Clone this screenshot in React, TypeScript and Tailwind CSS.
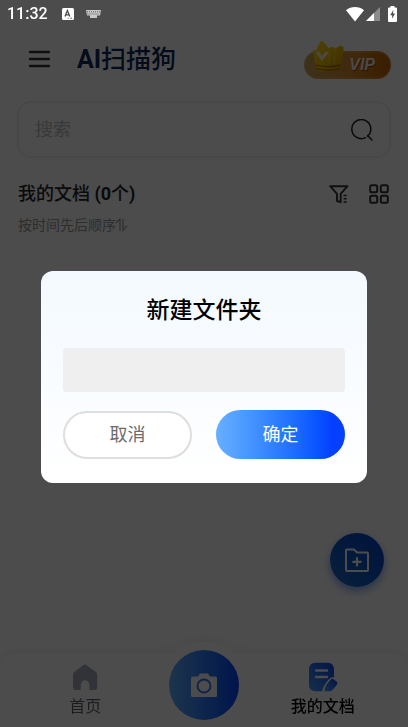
import React from "react";

function StatusBar() {
  return (
    <div className="pointer-events-none fixed inset-x-0 top-0 z-30 flex h-7 items-center pl-[7px] pr-[7px] text-white">
      <span className="font-['Roboto',sans-serif] text-base font-medium">11:32</span>
      <svg className="ml-[14px]" width="12" height="12" viewBox="0 0 12 12" aria-hidden="true">
        <rect width="12" height="12" rx="1.5" fill="#fff" />
        <path d="M3 8.6 5.4 2.6 7.8 8.6M3.8 6.8H7" stroke="#4c4c4c" strokeWidth="1.3" fill="none" />
        <path d="M5.6 10.2h1M8.2 10.2h2" stroke="#4c4c4c" strokeWidth="0.9" />
      </svg>
      <svg className="ml-3" width="15" height="8" viewBox="0 0 15 8" aria-hidden="true">
        <path d="M0 0h15l-1 5.5h-3V8H4V5.5H1Z" fill="#c9c9c9" />
        <path d="M1 1.8h13M1.5 4h12" stroke="#5a5a5a" strokeWidth="1" strokeDasharray="1 1" />
      </svg>
      <span className="flex-1" />
      <svg width="18" height="15" viewBox="0 0 18 15" aria-hidden="true">
        <path d="M0 3.2C5 -1 13 -1 18 3.2L9 14.5Z" fill="#fff" />
      </svg>
      <svg className="ml-[2px]" width="14" height="14" viewBox="0 0 14 14" aria-hidden="true">
        <path d="M14 0v14H0Z" fill="#8c8c8c" />
        <path d="M8 6v8H0Z" fill="#fff" />
      </svg>
      <svg className="ml-[8px] mr-[4px]" width="9" height="16" viewBox="0 0 9 16" aria-hidden="true">
        <path d="M2.5 0h4v1.5H8a1 1 0 0 1 1 1V15a1 1 0 0 1-1 1H1a1 1 0 0 1-1-1V2.500a1 1 0 0 1 1-1h1.500Z" fill="#fff" />
        <path d="M5.400 3.800 2.200 9.200h2v3.600L7 7.600H5Z" fill="#4c4c4c" />
      </svg>
    </div>
  );
}

function Crown() {
  return (
    <svg className="absolute -top-[11px] left-[8px]" width="34" height="33" viewBox="0 0 34 33" aria-hidden="true">
      <defs>
        <linearGradient id="crown" x1="0" y1="0" x2="1" y2="1">
          <stop offset="0" stopColor="#ffd91a" />
          <stop offset="0.5" stopColor="#f2c200" />
          <stop offset="1" stopColor="#cf9000" />
        </linearGradient>
      </defs>
      <path d="M4 28 1 12c-.4-2 1.300-2.700 3-1.500L8 2.200C9 .6 10.600.6 11.800 2.200L17 8.500c1.500-1.800 4.500-2 5.800.2l4.200-2.400c2.500-1.500 5 0 4.600 2.600L28.500 28c-.3 3-4.500 4-12 4S4.500 31 4 28Z" fill="url(#crown)" />
      <path d="M17 9v15M23 9.500 22 25M10 3.500l2 8" stroke="#ffe766" strokeWidth="1" fill="none" opacity=".5" />
      <path d="M4 25c7 2 17 2 24.500 0M4.500 28.500c7 2 17 2 23.500 0" stroke="#a86a00" strokeWidth="1.300" fill="none" />
      <path d="m3.800 12 3.200-.6 2.800 4.600 4.200-5 2.500 1.500-6.500 8.500Z" fill="#fff6e0" />
    </svg>
  );
}

function Header() {
  return (
    <header className="flex h-[63px] items-center pl-[28px] pr-[17px]">
      <button aria-label="菜单" className="shrink-0">
        <svg width="23" height="19" viewBox="0 0 23 19" fill="none" stroke="#333" strokeWidth="2.600" strokeLinecap="round" aria-hidden="true">
          <path d="M2.200 2h18.600M2.200 9h18.600M2.200 16h18.600" />
        </svg>
      </button>
      <h1 className="ml-[26px] flex-1 text-[25px] font-medium leading-8 text-[#10295a]"><b className="font-bold">AI</b>扫描狗</h1>
      <button className="relative mt-[10px] flex h-7 w-[87px] items-center justify-end rounded-full bg-linear-to-r from-[#c9a45c] via-[#d98a28] via-55% to-[#bd6200] pr-4 shadow-[inset_0_0_3px_rgba(255,225,160,0.6)]">
        <Crown />
        <span className="font-['Liberation_Sans',Arial,sans-serif] text-base font-bold italic text-[#fff0e0] [text-shadow:1px_1px_1px_#8a4a10]">VIP</span>
      </button>
    </header>
  );
}

function SearchBox() {
  return (
    <label className="mx-[17px] mt-[10px] flex h-[57px] items-center rounded-[14px] border-2 border-[#f1f1f1] pl-4 pr-4">
      <input type="text" placeholder="搜索" aria-label="搜索" className="min-w-0 flex-1 bg-transparent text-lg text-[#333] outline-none placeholder:text-[#bcbec4]" />
      <svg width="22" height="22" viewBox="0 0 22 22" fill="none" stroke="#22222a" strokeWidth="1.500" strokeLinecap="round" aria-hidden="true">
        <path d="M14.500 18.600A9.500 9.500 0 1 1 16.600 17.200M16.600 16.500 20.900 21" />
      </svg>
    </label>
  );
}

function DocumentsBar() {
  return (
    <section className="pl-[18px] pr-[19px] pt-[22px]">
      <div className="flex h-7 items-center">
        <h2 className="flex-1 text-lg font-medium text-[#262626]">我的文档 <b className="font-bold">(0</b>个<b className="font-bold">)</b></h2>
        <button aria-label="筛选">
          <svg width="20" height="20" viewBox="0 0 20 20" fill="none" stroke="#333" strokeWidth="1.900" strokeLinejoin="round" aria-hidden="true">
            <path d="M1.200 2.200h17.300l-6.800 7.600v8.400L8 17V9.800Z" />
            <path d="M14.600 11.500h3M14.600 14.700h3M14.600 17.900h3" strokeWidth="1.500" />
          </svg>
        </button>
        <button aria-label="网格视图" className="ml-5">
          <svg width="20" height="20" viewBox="0 0 20 20" fill="none" stroke="#333" strokeWidth="2" aria-hidden="true">
            <rect x="1.200" y="1.200" width="7" height="7" rx="1.500" />
            <rect x="11.800" y="1.200" width="7" height="7" rx="1.500" />
            <rect x="1.200" y="11.800" width="7" height="7" rx="1.500" />
            <rect x="11.800" y="11.800" width="7" height="7" rx="1.500" />
          </svg>
        </button>
      </div>
      <button className="mt-[7px] flex items-center text-sm text-[#999]">
        按时间先后顺序
        <svg className="-ml-px" width="13" height="14" viewBox="0 0 13 14" fill="none" stroke="#999" strokeWidth="1.200" aria-hidden="true">
          <path d="M1 5 5 1v12M8 1v11.500L12 7.500" />
        </svg>
      </button>
    </section>
  );
}

function AddFolderButton() {
  return (
    <button aria-label="新建文件夹" className="fixed bottom-[140px] right-6 flex size-[54px] items-center justify-center rounded-full bg-linear-to-tr from-[#1c6cc8] to-[#0a3cc8] shadow-[0_4px_8px_rgba(20,80,230,0.5)]">
      <svg width="26" height="26" viewBox="0 0 26 26" fill="none" stroke="#fff" strokeWidth="2" strokeLinejoin="round" strokeLinecap="round" aria-hidden="true">
        <path d="M2 3.500a1 1 0 0 1 1-1h7L13 5.500h10a1 1 0 0 1 1 1V23a1 1 0 0 1-1 1H3a1 1 0 0 1-1-1Z" />
        <path d="M13 11v7.600M9.200 14.800h7.600" strokeWidth="2.200" />
      </svg>
    </button>
  );
}

function BottomNav() {
  return (
    <nav className="relative mt-auto drop-shadow-[0_-2px_6px_rgba(0,0,0,0.06)]">
      <div className="absolute left-1/2 -top-3 size-[90px] -translate-x-1/2 rounded-full bg-white" />
      <div className="relative grid h-[74px] grid-cols-3 justify-items-center rounded-t-2xl bg-white px-[26px]">
        <a href="#home" className="flex flex-col items-center pt-[11px] text-base leading-6 text-[#60626c]">
          <svg width="26" height="26" viewBox="0 0 26 26" aria-hidden="true">
            <path d="M11.300 1.200a3 3 0 0 1 3.400 0l9.500 7c.8.6 1 1.200 1 2.300V23a3 3 0 0 1-3 3h-4.800v-5.500a4.200 4.200 0 0 0-8.600 0V26H4a3 3 0 0 1-3-3V10.500c0-1.100.3-1.700 1-2.300Z" fill="#a3aabb" />
          </svg>
          <span className="mt-[5px]">首页</span>
        </a>
        <button aria-label="拍照" className="-mt-[3px] flex size-[70px] items-center justify-center rounded-full bg-linear-to-r from-[#63aeff] to-[#0540ff]">
          <svg width="26" height="24" viewBox="0 0 26 24" aria-hidden="true">
            <path d="M1.500 3.500H7L9 .5h8l2 3h5.500A1.500 1.500 0 0 1 26 5v17.500a1.500 1.500 0 0 1-1.500 1.500h-23A1.500 1.500 0 0 1 0 22.500V5a1.500 1.500 0 0 1 1.500-1.500Z" fill="#fff" />
            <circle cx="13" cy="13" r="6.500" fill="none" stroke="#2f70ff" strokeWidth="1.800" />
          </svg>
        </button>
        <a href="#documents" className="flex flex-col items-center pt-[9px] text-base font-medium leading-6 text-black">
          <svg width="30" height="30" viewBox="0 0 30 30" aria-hidden="true">
            <defs>
              <linearGradient id="doc" x1="0" y1="1" x2="1" y2="0">
                <stop offset="0" stopColor="#4a9bff" />
                <stop offset="1" stopColor="#0a46e8" />
              </linearGradient>
            </defs>
            <path d="M7 .8h13a6 6 0 0 1 6 6v8.400c-3-.4-5 1.500-7 4.300-3 4-4.500 6.500-4.800 9.800H7a6 6 0 0 1-6-6V6.800a6 6 0 0 1 6-6Z" fill="url(#doc)" />
            <path d="M8 8.500h11M8 15h11" stroke="#fff" strokeWidth="2.400" strokeLinecap="round" />
            <path d="M22.500 17.800c1-1.200 2.300-1.300 3.400-.4l2.600 2.100c1.200 1 1.200 2.200.3 3.300l-3.800 4.700c-1 1.200-2 1.700-3.500 1.700h-4.800c.1-4.500 1.800-6.500 5.800-11.400Z" fill="url(#doc)" />
          </svg>
          <span className="mt-[3px]">我的文档</span>
        </a>
      </div>
    </nav>
  );
}

function NewFolderDialog() {
  return (
    <div className="fixed inset-0 z-20 flex items-center justify-center bg-black/70 pt-[27px]">
      <form role="dialog" aria-modal="true" aria-labelledby="dialog-title" onSubmit={(e) => e.preventDefault()} className="w-4/5 rounded-xl bg-linear-to-b from-[#f3f9ff] to-white px-[22px] pb-6 pt-6">
        <h2 id="dialog-title" className="text-center text-[23px] font-medium leading-8 text-black">新建文件夹</h2>
        <input type="text" aria-labelledby="dialog-title" className="mt-[21px] block h-11 w-full rounded-[4px] bg-[#efefef] px-3 text-base outline-none" />
        <div className="mt-[18px] grid grid-cols-2 items-end gap-6">
          <button type="button" className="h-12 rounded-full border-2 border-[#dedede] bg-white text-lg text-[#6c6c6c]">取消</button>
          <button type="submit" className="h-[49px] rounded-full bg-linear-to-r from-[#66b0ff] to-[#0540ff] to-90% text-lg text-white">确定</button>
        </div>
      </form>
    </div>
  );
}

export default function App() {
  return (
    <div className="flex min-h-screen flex-col bg-white pt-7 font-['Roboto','Noto_Sans_CJK_SC',sans-serif]">
      <StatusBar />
      <Header />
      <SearchBox />
      <DocumentsBar />
      <AddFolderButton />
      <BottomNav />
      <NewFolderDialog />
    </div>
  );
}
